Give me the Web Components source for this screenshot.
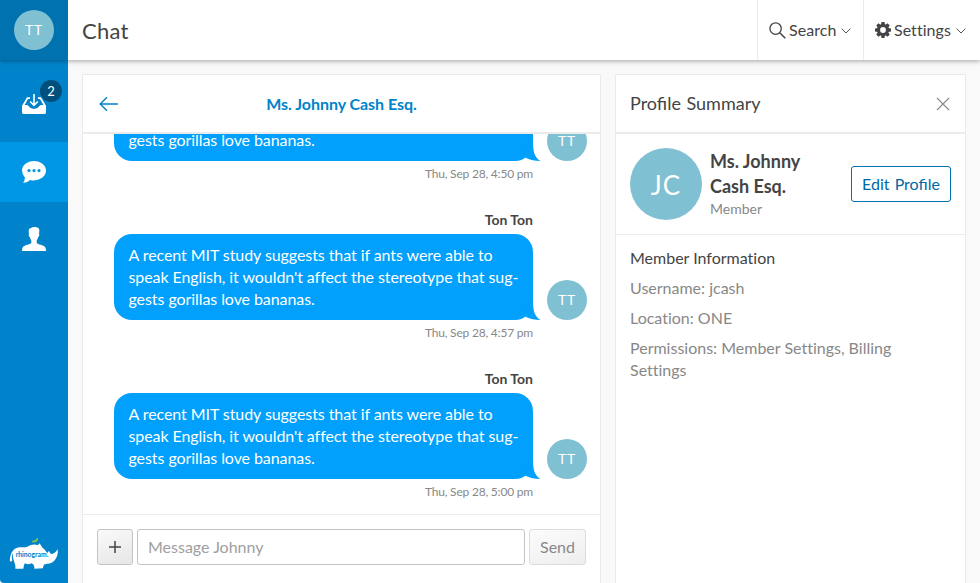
<!DOCTYPE html>
<html lang="en"><head><meta charset="utf-8"><title>Chat</title>
<style>
html,body{margin:0;height:100%;overflow:hidden}
body{font:16px/22px Lato,"Liberation Sans",sans-serif;color:#444;background:#f9f9f9}
</style></head><body>
<chat-app></chat-app>
<script>
function define(name, html){
  const t=document.createElement('template');
  t.innerHTML='<style>*{box-sizing:border-box}svg{display:block}</style>'+html;
  customElements.define(name,class extends HTMLElement{
    constructor(){super();this.attachShadow({mode:'open'}).append(t.content.cloneNode(true));}
  });
}
define('user-avatar',`<style>
:host{display:flex;align-items:center;justify-content:center;flex:none;width:40px;height:40px;border-radius:50%;background:#80c0d3;color:#fff;font-size:14px;line-height:20px;letter-spacing:.7px}
:host([large]){width:72px;height:72px;font-size:26px;line-height:34px;letter-spacing:1px}
:host([large]) span{padding-top:2px}
</style><span><slot></slot></span>`);

define('rhino-logo',`<style>:host{display:block;width:50px;height:33px}</style>
<svg width="50" height="33" viewBox="27 51 150 99">
<path fill="#fff" d="M30 124C29 109 34 94 45 86C57 78 70 84 82 80C93 74 103 71 114 76L118 70C123 75 125 82 131 86C135 88 137 94 142 99L147 92C149 98 152 103 157 102C165 99 170 93 173 87C175 101 171 112 164 121C156 131 146 131 138 132C133 133 130 134 129 145L103 146C104 138 101 132 94 130C86 134 80 133 76 130C70 134 72 140 70 146H46C48 136 43 129 41 120C38 113 38 105 40 98C36 103 34 114 37 121L33 125Z"/>
<path fill="#8cc63f" d="M95 66C99 60 104 62 107 61C107 57 110 55 114 54C115 60 112 65 107 66C103 68 99 67 95 66Z"/>
<text x="47" y="112" font-family="Lato,sans-serif" font-size="21" font-weight="700" fill="#0083ca" textLength="98" lengthAdjust="spacingAndGlyphs">rhinogram.</text>
</svg>`);

define('nav-item',`<style>
:host{display:flex;align-items:center;justify-content:center;height:60px;position:relative}
:host([active]){background:#0096e6}
:host(:not(:first-child)){padding-bottom:2px}
</style><slot></slot><slot name="badge"></slot>`);
define('nav-badge',`<style>
:host{position:absolute;left:40px;top:6px;width:22px;height:22px;border-radius:50%;background:#00507d;color:#fff;font-size:13px;line-height:22px;text-align:center}
</style><slot></slot>`);

define('side-bar',`<style>
:host{display:flex;flex-direction:column;width:68px;flex:none;background:#0083ca;border-bottom-left-radius:4px}
.user{height:60px;display:flex;align-items:center;justify-content:center;background:#0072b0;box-shadow:0 1px 4px rgba(0,0,0,.35)}
nav{display:flex;flex-direction:column;gap:8px;padding-top:14px;flex:1}
footer{padding:0 0 13px 9px}
</style>
<div class="user"><user-avatar>TT</user-avatar></div>
<nav>
<nav-item><svg width="24" height="22" viewBox="0 0 24 22"><path fill="#fff" d="M5 4.2H8V6H6L2.6 12H4.5Q6 12 6.8 13.2Q8.5 16 12 16T17.2 13.2Q18 12 19.5 12H21.4L18 6H16V4.2H19L24 12.8V19.6Q24 21 22.6 21H1.4Q0 21 0 19.6V12.8Z"/><path d="M12 1V12M8.2 8.5L12 12.3L15.8 8.5" fill="none" stroke="#fff" stroke-width="1.6"/></svg><nav-badge slot="badge">2</nav-badge></nav-item>
<nav-item active><svg width="24" height="24" viewBox="0 0 24 24"><path fill="#fff" d="M12 2C18.7 2 24 6.3 24 11.6S18.7 21.4 12 21.4Q10 21.4 8.1 20.9Q5.5 23.7 1.2 24Q3 21.5 2.9 18.4Q0 15.6 0 11.6C0 6.3 5.3 2 12 2Z"/><g fill="#0096e6"><circle cx="7" cy="11.6" r="1.6"/><circle cx="12" cy="11.6" r="1.6"/><circle cx="17" cy="11.6" r="1.6"/></g></svg></nav-item>
<nav-item><svg width="24" height="26" viewBox="0 0 24 26"><path fill="#fff" d="M12 1C15.4 1 17.7 1.7 17.3 5.4L17 8C17.7 8.5 17.3 10.6 16.2 11C15.8 12.8 15 13.8 14.7 14.6V17C16 18.4 21.5 19.2 23 21C23.8 22 24 23.5 24 25H0C0 23.5.2 22 1 21C2.5 19.2 8 18.4 9.3 17V14.6C9 13.8 8.2 12.8 7.8 11C6.7 10.6 6.3 8.5 7 8L6.7 5.4C6.4 2.8 8.2 2.2 9 2C10 1.2 11 1 12 1Z"/></svg></nav-item>
</nav>
<footer><rhino-logo></rhino-logo></footer>`);

const chevron='<svg width="10" height="6" viewBox="0 0 10 6"><path d="M.6 .6L5 5L9.4 .6" fill="none" stroke="#555"/></svg>';
define('header-menu',`<style>
:host{display:flex;align-items:center;height:60px;border-left:1px solid #ebebeb;padding:0 12px 0 11px;font-variant-ligatures:none}
.label{margin:0 5px 0 3px;letter-spacing:.05px}.chev{padding-top:2px}
</style><slot name="icon"></slot><span class="label"><slot></slot></span><span class="chev">${chevron}</span>`);
define('top-bar',`<style>
:host{display:flex;height:60px;flex:none;background:#fff;box-shadow:0 1px 5px rgba(0,0,0,.36);position:relative;clip-path:inset(0 0 -12px 0)}
h1{font-size:22px;line-height:30px;font-weight:400;margin:0;padding:16px 14px;flex:1;letter-spacing:.25px}
.s{width:106px}.t{width:117px}
svg{flex:none}
</style><h1>Chat</h1>
<header-menu class="s"><svg slot="icon" width="17" height="17" viewBox="0 0 17 17"><g fill="none" stroke="#444" stroke-width="1.3"><circle cx="6.6" cy="6.6" r="5.7"/><path d="M10.7 10.7L16.3 16.2" stroke-width="1.6"/></g></svg>Search</header-menu>
<header-menu class="t"><svg slot="icon" width="16" height="16" viewBox="0 0 16 16"><g fill="#444"><path d="M6.5 0H9.5L10 3H6ZM6.5 16H9.5L10 13H6ZM0 6.5V9.5L3 10V6ZM16 6.5V9.5L13 10V6Z"/><path transform="rotate(45 8 8)" d="M6.5 0H9.5L10 3H6ZM6.5 16H9.5L10 13H6ZM0 6.5V9.5L3 10V6ZM16 6.5V9.5L13 10V6Z"/></g><circle cx="8" cy="8" r="4.5" fill="none" stroke="#444" stroke-width="3.2"/></svg>Settings</header-menu>`);

define('chat-message',`<style>
:host{display:grid;grid-template-columns:419px 40px;column-gap:14px;height:159px;flex:none;grid-template-rows:26px 86px 22px;align-content:start}
.name{font-size:14px;font-weight:700;text-align:right;padding-top:1px}
.bubble{grid-row:2;background:#00a0fc;border-radius:18px;color:#fff;padding:10px 14px 10px 14.5px;position:relative;white-space:nowrap;letter-spacing:-.075px;display:flex;flex-direction:column;justify-content:flex-end}
.bubble svg{position:absolute;right:-8px;bottom:0}
user-avatar{grid-row:2;grid-column:2;align-self:end}
time{grid-row:3;text-align:right;font-size:12px;color:#888;padding-top:2px;letter-spacing:-.2px}
</style>
<div class="name"><slot name="name"></slot></div>
<div class="bubble"><slot name="text"></slot><svg width="18" height="24" viewBox="0 0 18 24"><path fill="#00a0fc" d="M10 3C10 14 11 20 17.5 24C12 24 7 23 3 21L0 17Z"/></svg></div>
<user-avatar>TT</user-avatar>
<time><slot></slot></time>`);

define('panel-card',`<style>
:host{display:flex;flex-direction:column;background:#fff;border:1px solid #ebebeb;border-bottom:0;min-height:0}
header{height:59px;flex:none;display:flex;align-items:center;border-bottom:2px solid #ebebeb;padding:0 15px 0 14px}
</style><header><slot name="head"></slot></header><slot></slot>`);

define('message-composer',`<style>
:host{display:flex;gap:4px;height:69px;flex:none;padding:14px;border-top:1px solid #ebebeb}
button,input{height:36px;border:1px solid #c4c4c4;border-radius:3px;font:inherit;margin:0}
button{background:linear-gradient(160deg,#fafafa,#e6e6e6);padding:0;color:#444;display:flex;align-items:center;justify-content:center}
.plus{width:36px}.send{width:57px;color:#888;border-color:#dcdcdc;background:linear-gradient(160deg,#fcfcfc,#eee)}
input{flex:1;min-width:0;padding:0 10px 2px;background:#fff}
input::placeholder{color:#a0a0a0;opacity:1}
</style><button class="plus" aria-label="Add"><svg width="12" height="12" viewBox="0 0 12 12"><path d="M6 0V12M0 6H12" stroke="#444" stroke-width="1.5"/></svg></button><input placeholder="Message Johnny"><button class="send">Send</button>`);

const full='<span slot="name">Ton Ton</span><span slot="text">A recent MIT study suggests that if ants were able to</span><span slot="text">speak English, it wouldn\'t affect the stereotype that sug-</span><span slot="text">gests gorillas love bananas.</span>';
define('chat-panel',`<style>
:host{display:flex;width:519px;flex:none}
panel-card{flex:1}
.back{width:20px;margin-left:2px}.title{flex:1;text-align:center;color:#0083ca;font-weight:700;padding-right:21px;letter-spacing:-.04px}
.log{flex:1;min-height:0;overflow:hidden;display:flex;flex-direction:column;justify-content:flex-end;padding:0 13px 0 31px}
chat-message:last-child{height:147px}
</style><panel-card>
<svg slot="head" class="back" width="20" height="16" viewBox="0 0 20 16"><path d="M19 8H1.2M8 1.2L1.2 8L8 14.8" fill="none" stroke="#0083ca" stroke-width="1.4"/></svg>
<span slot="head" class="title">Ms. Johnny Cash Esq.</span>
<div class="log"><chat-message><span slot="text">gests gorillas love bananas.</span>Thu, Sep 28, 4:50 pm</chat-message><chat-message>${full}Thu, Sep 28, 4:57 pm</chat-message><chat-message>${full}Thu, Sep 28, 5:00 pm</chat-message></div>
<message-composer></message-composer></panel-card>`);

define('profile-panel',`<style>
:host{display:flex;flex:1;min-width:0}
panel-card{flex:1}
.title{flex:1;font-size:18px;padding-bottom:2px;word-spacing:1px}
.who{height:101px;display:flex;align-items:center;gap:8px;padding:0 14px;border-bottom:1px solid #ebebeb}
.id{flex:1}
.name{font-size:18px;line-height:25px;font-weight:700}
.role{font-size:14px;line-height:20px;color:#888}
button{width:100px;height:36px;border:1px solid #0072b0;border-radius:3px;background:#fff;color:#0069a3;font:inherit;padding:0;word-spacing:1px}
.info{padding:12px 14px;display:flex;flex-direction:column;gap:8px;color:#888;font-variant-ligatures:none}
.info b{font-weight:400;color:#444}
</style><panel-card>
<span slot="head" class="title">Profile Summary</span>
<svg slot="head" width="14" height="14" viewBox="0 0 14 14"><path d="M1 1L13 13M13 1L1 13" stroke="#888" stroke-width="1.1"/></svg>
<div class="who"><user-avatar large>JC</user-avatar><div class="id"><div class="name">Ms. Johnny<br>Cash Esq.</div><div class="role">Member</div></div><button>Edit Profile</button></div>
<div class="info"><b>Member Information</b><span>Username: jcash</span><span>Location: ONE</span><span>Permissions: Member Settings, Billing Settings</span></div>
</panel-card>`);

define('chat-app',`<style>
:host{display:flex;height:100vh}
.main{flex:1;display:flex;flex-direction:column;min-width:0}
.body{flex:1;display:flex;gap:14px;padding:14px 14px 0;min-height:0}
</style><side-bar></side-bar><div class="main"><top-bar></top-bar><div class="body"><chat-panel></chat-panel><profile-panel></profile-panel></div></div>`);
</script></body></html>
